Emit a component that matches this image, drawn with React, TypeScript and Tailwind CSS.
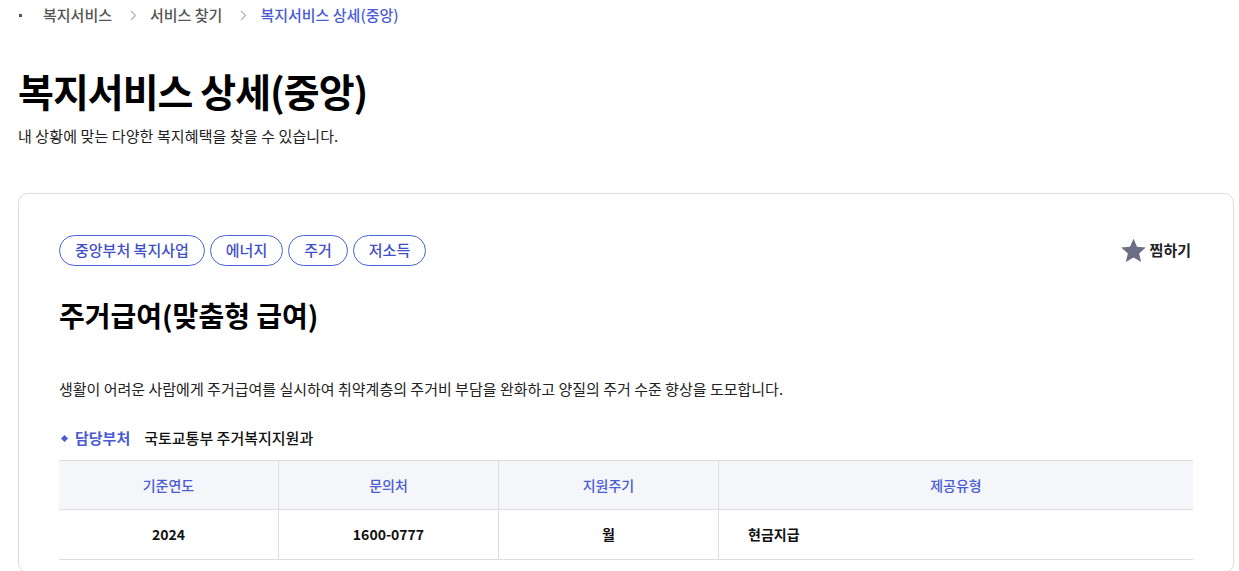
// ── Data ──────────────────────────────────────────────────────────────────────
const TAGS = ['중앙부처 복지사업', '에너지', '주거', '저소득'];

const COLUMNS = [
  { head: '기준연도', value: '2024',      w: 'w-[220px]', align: 'text-center' },
  { head: '문의처',   value: '1600-0777', w: 'w-[220px]', align: 'text-center' },
  { head: '지원주기', value: '월',        w: 'w-[220px]', align: 'text-center' },
  { head: '제공유형', value: '현금지급',  w: 'flex-1',    align: 'text-left pl-[29px]' },
];

function Chevron() {
  return (
    <svg width="7" height="11" viewBox="0 0 7 11" className="ml-[18px] mr-[13px]">
      <path d="M1 1l4.5 4.5L1 10" fill="none" stroke="#b5b5b5" strokeWidth="1.3" />
    </svg>
  );
}

// ── Component ─────────────────────────────────────────────────────────────────
export default function App() {
  return (
    <div className="w-[1239px] h-[571px] overflow-hidden bg-white text-[#111] font-['Noto_Sans_CJK_KR','Noto_Sans',sans-serif]">

      {/* Breadcrumb */}
      <div className="flex items-center h-[30px] pl-[19px] text-[15px] font-medium text-[#555]">
        <span className="w-[3px] h-[3px] bg-[#555] mr-[21px]" />
        <span>복지서비스</span>
        <Chevron />
        <span>서비스 찾기</span>
        <Chevron />
        <span className="text-[#4a5bd4]">복지서비스 상세(중앙)</span>
      </div>

      {/* Page header */}
      <div className="px-[18px] pt-[34px]">
        <h1 className="text-[39px] font-bold leading-[52px] tracking-[-1px] text-black">복지서비스 상세(중앙)</h1>
        <p className="mt-[9px] text-[15px] leading-[22px] text-[#222] tracking-[0.1px]">내 상황에 맞는 다양한 복지혜택을 찾을 수 있습니다.</p>
      </div>

      {/* Card */}
      <div className="ml-[18px] mr-[5px] mt-[46px] border border-[#ddd] rounded-[10px] px-[40px] pt-[41px] pb-[12px]">

        {/* Tags + bookmark */}
        <div className="flex items-center justify-between">
          <div className="flex gap-[5px]">
            {TAGS.map(t => (
              <span key={t} className="h-[31px] px-[15px] flex items-center rounded-full border border-[#4a63d8] text-[15px] font-medium text-[#3f4fc8]">
                {t}
              </span>
            ))}
          </div>
          <button className="flex items-center gap-[3px] text-[15px] font-bold text-[#222] mr-[2px]">
            <svg width="27" height="27" viewBox="0 0 24 24">
              <path d="M12 1.5l3.1 7.2 7.8.7-5.9 5.2 1.8 7.7L12 18.2l-6.8 4.1 1.8-7.7-5.9-5.2 7.8-.7z" fill="#6b6e85" />
            </svg>
            찜하기
          </button>
        </div>

        {/* Title */}
        <h2 className="mt-[29px] text-[28px] font-bold leading-[40px] text-black">주거급여(맞춤형 급여)</h2>

        {/* Description */}
        <p className="mt-[42px] text-[15px] leading-[24px] text-[#222]">
          생활이 어려운 사람에게 주거급여를 실시하여 취약계층의 주거비 부담을 완화하고 양질의 주거 수준 향상을 도모합니다.
        </p>

        {/* Department */}
        <div className="mt-[25px] flex items-center text-[15px] leading-[24px]">
          <span className="w-[5px] h-[5px] bg-[#4a5bd4] rotate-45 ml-[3px] mr-[8px]" />
          <span className="font-bold text-[#4a5bd4]">담당부처</span>
          <span className="ml-[14px] font-medium text-[#111]">국토교통부 주거복지지원과</span>
        </div>

        {/* Table */}
        <div className="mt-[10px] border-t border-[#ddd]">
          <div className="flex h-[49px] bg-[#f5f6fa] border-b border-[#ddd]">
            {COLUMNS.map((c, i) => (
              <div key={c.head} className={`${c.w} flex items-center justify-center text-[14px] font-medium text-[#4a5bd4] ${i < 3 ? 'border-r border-[#ddd]' : ''}`}>
                {c.head}
              </div>
            ))}
          </div>
          <div className="flex h-[50px] border-b border-[#ddd]">
            {COLUMNS.map((c, i) => (
              <div key={c.head} className={`${c.w} ${c.align} flex items-center ${i < 3 ? 'justify-center border-r border-[#ddd]' : ''} text-[14px] font-bold text-[#111]`}>
                {c.value}
              </div>
            ))}
          </div>
        </div>
      </div>
    </div>
  );
}
